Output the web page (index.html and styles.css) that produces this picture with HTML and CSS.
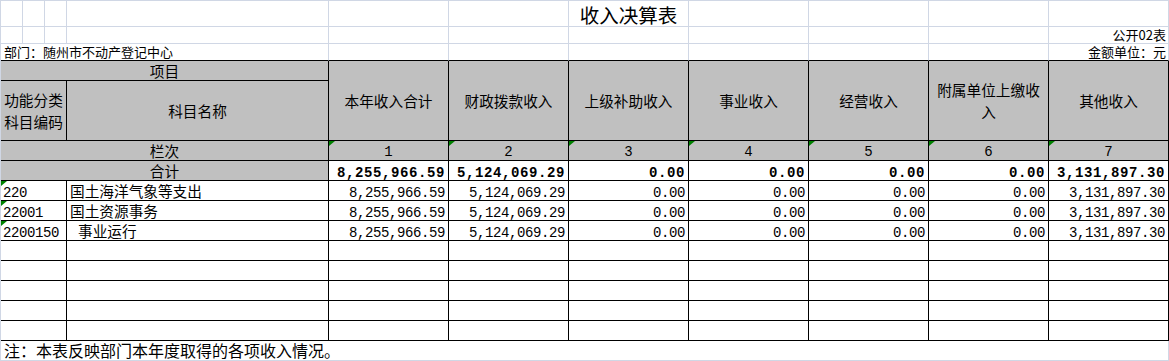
FILE: index.html
```html
<!DOCTYPE html>
<html lang="zh-CN">
<head>
<meta charset="utf-8">
<title>收入决算表</title>
<link rel="stylesheet" href="styles.css">
</head>
<body>
<div class="sheet">
  <!-- row 1 -->
  <div class="c"></div><div class="c"></div><div class="c"></div><div class="c"></div>
  <div class="c"></div><div class="c"></div>
  <div class="c title">收入决算表</div>
  <div class="c"></div><div class="c"></div><div class="c"></div><div class="c"></div>

  <!-- row 2 -->
  <div class="c"></div><div class="c"></div><div class="c"></div><div class="c"></div>
  <div class="c"></div><div class="c"></div><div class="c"></div><div class="c"></div>
  <div class="c"></div><div class="c"></div>
  <div class="c small right">公开02表</div>

  <!-- row 3 -->
  <div class="c small top s4 dept">部门：随州市不动产登记中心</div>
  <div class="c top"></div><div class="c top"></div><div class="c top"></div>
  <div class="c top"></div><div class="c top"></div><div class="c top"></div>
  <div class="c small right top">金额单位：元</div>

  <!-- header -->
  <div class="c t hd s4">项目</div>
  <div class="c t hd r2">本年收入合计</div>
  <div class="c t hd r2">财政拨款收入</div>
  <div class="c t hd r2">上级补助收入</div>
  <div class="c t hd r2">事业收入</div>
  <div class="c t hd r2">经营收入</div>
  <div class="c t hd r2 two">附属单位上缴收<br>入</div>
  <div class="c t hd r2">其他收入</div>
  <div class="c t hd s3 two">功能分类<br>科目编码</div>
  <div class="c t hd">科目名称</div>

  <!-- 栏次 -->
  <div class="c t hd s4">栏次</div>
  <div class="c t hd lc tri">1</div>
  <div class="c t hd lc tri">2</div>
  <div class="c t hd lc tri">3</div>
  <div class="c t hd lc tri">4</div>
  <div class="c t hd lc tri">5</div>
  <div class="c t hd lc tri">6</div>
  <div class="c t hd lc tri">7</div>

  <!-- 合计 -->
  <div class="c t hd s4">合计</div>
  <div class="c t num b">8,255,966.59</div>
  <div class="c t num b">5,124,069.29</div>
  <div class="c t num b">0.00</div>
  <div class="c t num b">0.00</div>
  <div class="c t num b">0.00</div>
  <div class="c t num b">0.00</div>
  <div class="c t num b">3,131,897.30</div>

  <!-- data rows -->
  <div class="c t s3 code tri">220</div>
  <div class="c t name">国土海洋气象等支出</div>
  <div class="c t num">8,255,966.59</div>
  <div class="c t num">5,124,069.29</div>
  <div class="c t num">0.00</div>
  <div class="c t num">0.00</div>
  <div class="c t num">0.00</div>
  <div class="c t num">0.00</div>
  <div class="c t num">3,131,897.30</div>

  <div class="c t s3 code tri">22001</div>
  <div class="c t name">国土资源事务</div>
  <div class="c t num">8,255,966.59</div>
  <div class="c t num">5,124,069.29</div>
  <div class="c t num">0.00</div>
  <div class="c t num">0.00</div>
  <div class="c t num">0.00</div>
  <div class="c t num">0.00</div>
  <div class="c t num">3,131,897.30</div>

  <div class="c t s3 code tri">2200150</div>
  <div class="c t name indent">事业运行</div>
  <div class="c t num">8,255,966.59</div>
  <div class="c t num">5,124,069.29</div>
  <div class="c t num">0.00</div>
  <div class="c t num">0.00</div>
  <div class="c t num">0.00</div>
  <div class="c t num">0.00</div>
  <div class="c t num">3,131,897.30</div>

  <!-- empty rows -->
  <div class="c t s3"></div><div class="c t"></div>
  <div class="c t"></div><div class="c t"></div><div class="c t"></div><div class="c t"></div><div class="c t"></div><div class="c t"></div><div class="c t"></div>
  <div class="c t s3"></div><div class="c t"></div>
  <div class="c t"></div><div class="c t"></div><div class="c t"></div><div class="c t"></div><div class="c t"></div><div class="c t"></div><div class="c t"></div>
  <div class="c t s3"></div><div class="c t"></div>
  <div class="c t"></div><div class="c t"></div><div class="c t"></div><div class="c t"></div><div class="c t"></div><div class="c t"></div><div class="c t"></div>
  <div class="c t s3"></div><div class="c t"></div>
  <div class="c t"></div><div class="c t"></div><div class="c t"></div><div class="c t"></div><div class="c t"></div><div class="c t"></div><div class="c t"></div>
  <div class="c t s3"></div><div class="c t"></div>
  <div class="c t"></div><div class="c t"></div><div class="c t"></div><div class="c t"></div><div class="c t"></div><div class="c t"></div><div class="c t"></div>

  <!-- note -->
  <div class="c s11 note">注：本表反映部门本年度取得的各项收入情况。</div>
</div>
</body>
</html>
```

FILE: styles.css
```css
* {
  box-sizing: border-box;
}

html,
body {
  margin: 0;
  padding: 0;
  background: #ffffff;
}

body {
  font-family: "Noto Sans CJK SC", "Noto Sans", sans-serif;
  color: #000000;
}

.sheet {
  display: grid;
  grid-template-columns: 22px 22px 22px 262px repeat(7, 120px);
  grid-template-rows: 26px 17px 17px 20px 60px 20px 20px repeat(8, 20px) 20px;
  width: 1169px;
  border-left: 1px solid #d0d7e5;
  border-top: 1px solid #d0d7e5;
}

.c {
  position: relative;
  display: flex;
  align-items: center;
  border-right: 1px solid #d0d7e5;
  border-bottom: 1px solid #d0d7e5;
  font-size: 14.67px;
  line-height: 18px;
  white-space: nowrap;
  background: #ffffff;
}

.t {
  border-right-color: #000000;
  border-bottom-color: #000000;
}

.top {
  border-bottom-color: #000000;
}

.s3 {
  grid-column: span 3;
}

.s4 {
  grid-column: span 4;
}

.s11 {
  grid-column: span 11;
}

.r2 {
  grid-row: span 2;
}

.title {
  justify-content: center;
  align-items: flex-end;
  font-size: 19.5px;
  line-height: 23px;
}

.small {
  font-size: 13px;
  line-height: 16px;
}

.right {
  justify-content: flex-end;
  padding-right: 2px;
}

.dept {
  padding-left: 3px;
}

.hd {
  background: #c0c0c0;
  justify-content: center;
  text-align: center;
}

.two {
  line-height: 21.3px;
}

.lc {
  font-family: "Liberation Mono", monospace;
  font-size: 14px;
  align-items: flex-end;
  line-height: 15px;
}

.num {
  justify-content: flex-end;
  align-items: flex-end;
  padding-right: 3px;
  font-family: "Liberation Mono", monospace;
  font-size: 14px;
  line-height: 14px;
  letter-spacing: -0.4px;
}

.num.b {
  font-weight: bold;
  letter-spacing: 0.6px;
}

.code {
  align-items: flex-end;
  padding-left: 2px;
  font-family: "Liberation Mono", monospace;
  font-size: 14px;
  line-height: 14px;
  letter-spacing: -0.4px;
}

.name {
  padding-left: 3px;
}

.indent {
  padding-left: 11px;
}

.tri::before {
  content: "";
  position: absolute;
  top: 0;
  left: 0;
  border-top: 5px solid #008000;
  border-right: 6px solid transparent;
}

.note {
  font-size: 16px;
  line-height: 19px;
  padding-left: 3px;
}
```
